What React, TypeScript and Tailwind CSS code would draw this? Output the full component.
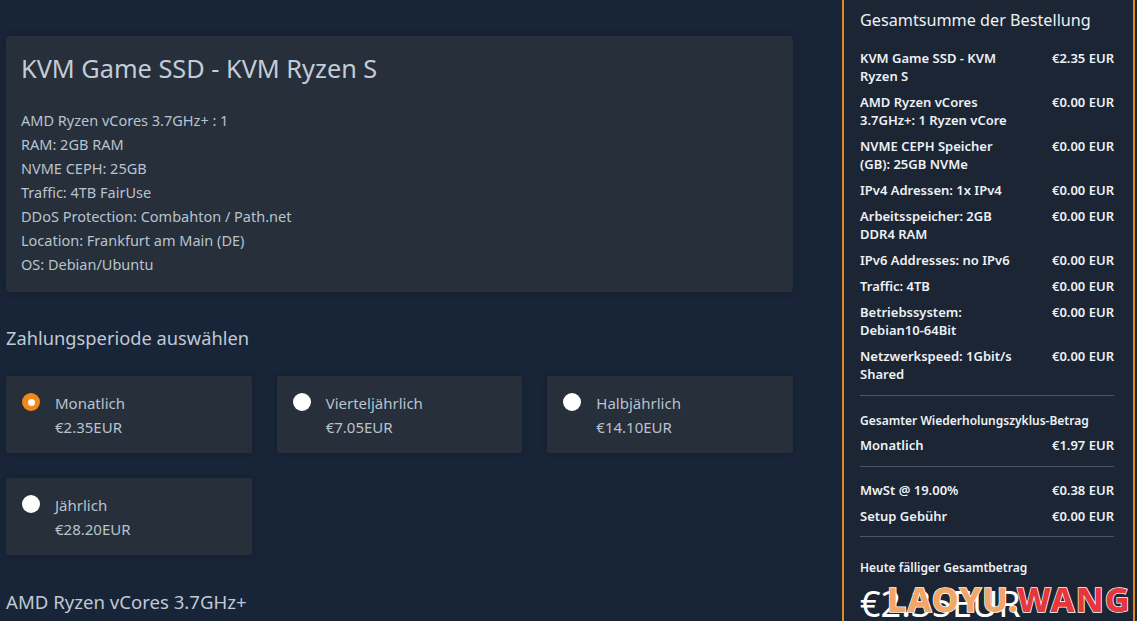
import React from "react";

const features = [
  "AMD Ryzen vCores 3.7GHz+ : 1",
  "RAM: 2GB RAM",
  "NVME CEPH: 25GB",
  "Traffic: 4TB FairUse",
  "DDoS Protection: Combahton / Path.net",
  "Location: Frankfurt am Main (DE)",
  "OS: Debian/Ubuntu",
];

const periods = [
  { name: "Monatlich", price: "€2.35EUR", selected: true },
  { name: "Vierteljährlich", price: "€7.05EUR" },
  { name: "Halbjährlich", price: "€14.10EUR" },
  { name: "Jährlich", price: "€28.20EUR" },
];

const items: { label: string[]; price: string }[] = [
  { label: ["KVM Game SSD - KVM", "Ryzen S"], price: "€2.35 EUR" },
  { label: ["AMD Ryzen vCores", "3.7GHz+: 1 Ryzen vCore"], price: "€0.00 EUR" },
  { label: ["NVME CEPH Speicher", "(GB): 25GB NVMe"], price: "€0.00 EUR" },
  { label: ["IPv4 Adressen: 1x IPv4"], price: "€0.00 EUR" },
  { label: ["Arbeitsspeicher: 2GB", "DDR4 RAM"], price: "€0.00 EUR" },
  { label: ["IPv6 Addresses: no IPv6"], price: "€0.00 EUR" },
  { label: ["Traffic: 4TB"], price: "€0.00 EUR" },
  { label: ["Betriebssystem:", "Debian10-64Bit"], price: "€0.00 EUR" },
  { label: ["Netzwerkspeed: 1Gbit/s", "Shared"], price: "€0.00 EUR" },
];

function Radio({ selected }: { selected?: boolean }) {
  return selected ? (
    <span className="mt-[2px] flex h-[18px] w-[18px] shrink-0 items-center justify-center rounded-full bg-[#f0891a]">
      <span className="h-[7px] w-[7px] rounded-full bg-white" />
    </span>
  ) : (
    <span className="mt-[2px] h-[18px] w-[18px] shrink-0 rounded-full bg-white" />
  );
}

function PeriodCard({ p }: { p: (typeof periods)[number] }) {
  return (
    <div className="flex h-[77px] gap-[15px] rounded-[2px] bg-[#262f3a] pl-4 pt-[15px] shadow-[0_0_6px_rgba(0,0,0,0.15)]">
      <Radio selected={p.selected} />
      <div className="text-[15px] leading-6 text-[#b9c3ce]">
        <div>{p.name}</div>
        <div>{p.price}</div>
      </div>
    </div>
  );
}

export default function App() {
  return (
    <div
      className="relative flex h-[621px] w-[1137px] overflow-hidden bg-[#182437]"
      style={{ fontFamily: '"Noto Sans", "Open Sans", sans-serif' }}
    >
      {/* main column */}
      <div className="w-[793px] shrink-0 pl-[6px] pt-[36px]">
        <div className="rounded-[4px] bg-[#262f3a] px-[15px] pb-4 pt-4 shadow-[0_0_8px_rgba(0,0,0,0.2)]">
          <h1 className="text-[25.3px] leading-8 text-[#c3ccd6]">KVM Game SSD - KVM Ryzen S</h1>
          <div className="mt-6 text-[14.5px] leading-6 text-[#b9c3ce]">
            {features.map((f) => (
              <div key={f}>{f}</div>
            ))}
          </div>
        </div>

        <h2 className="mt-[32px] text-[18.3px] leading-7 text-[#c0c9d4]">Zahlungsperiode auswählen</h2>

        <div className="mt-[24px] grid grid-cols-3 gap-x-[25px] gap-y-[25px]">
          {periods.map((p) => (
            <PeriodCard key={p.name} p={p} />
          ))}
        </div>

        <h2 className="mt-[33px] text-[18.6px] leading-7 text-[#c0c9d4]">AMD Ryzen vCores 3.7GHz+</h2>
      </div>

      {/* sidebar */}
      <div className="relative ml-[49px] h-[621px] w-[293px] shrink-0 border-x-2 border-[#e08a1e] bg-[#1b2534] pl-[16px] pr-[19px] pt-[8px] text-[#eef1f5]">
        <div className="text-[16.2px] leading-6">Gesamtsumme der Bestellung</div>
        <div className="mt-[17px] text-[13px] font-semibold leading-[18px]">
          {items.map((it, i) => (
            <div key={i} className="mb-[8px] flex justify-between">
              <div>
                {it.label.map((l) => (
                  <div key={l} className="whitespace-nowrap">
                    {l}
                  </div>
                ))}
              </div>
              <div className="whitespace-nowrap">{it.price}</div>
            </div>
          ))}
        </div>
        <div className="mt-[12px] border-t border-[#4a5462]" />
        <div className="mt-[16px] text-[12px] font-semibold leading-[18px]">Gesamter Wiederholungszyklus-Betrag</div>
        <div className="mt-[6px] flex justify-between text-[13px] font-semibold leading-[18px]">
          <span>Monatlich</span>
          <span>€1.97 EUR</span>
        </div>
        <div className="mt-[12px] border-t border-[#4a5462]" />
        <div className="mt-[14px] text-[13px] font-semibold leading-[18px]">
          <div className="mb-[8px] flex justify-between">
            <span>MwSt @ 19.00%</span>
            <span>€0.38 EUR</span>
          </div>
          <div className="flex justify-between">
            <span>Setup Gebühr</span>
            <span>€0.00 EUR</span>
          </div>
        </div>
        <div className="mt-[11px] border-t border-[#4a5462]" />
        <div className="mt-[22px] text-[12px] font-semibold leading-[18px]">Heute fälliger Gesamtbetrag</div>
        <div className="mt-[7px] text-[36px] leading-[40px] text-white">€2.35EUR</div>

        {/* watermark */}
        <div className="absolute left-[43px] top-[579px] whitespace-nowrap text-[34px] font-extrabold leading-[40px] tracking-[1px] [-webkit-text-stroke:1.5px_#ffffff] [paint-order:stroke_fill]">
          <span className="text-[#f2a667]">LAOYU.</span>
          <span className="text-[#e6373c]">WANG</span>
        </div>
      </div>
    </div>
  );
}
